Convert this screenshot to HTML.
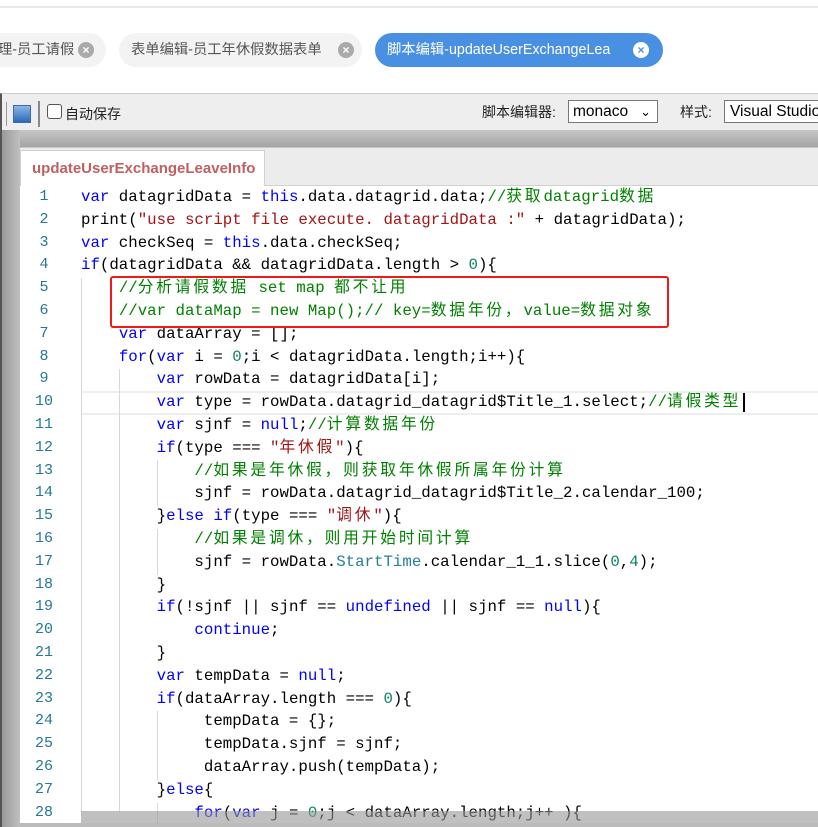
<!DOCTYPE html>
<html><head><meta charset="utf-8"><style>
*{margin:0;padding:0;box-sizing:border-box}
body{width:818px;height:827px;overflow:hidden;background:#fff;font-family:"Liberation Sans","Noto Sans CJK SC",sans-serif;position:relative}
.topline{position:absolute;left:0;top:6px;width:818px;height:2px;background:#e4e8ec}
.tab{position:absolute;top:33px;height:34px;border-radius:17px;background:#f3f3f3;color:#555;font-size:14.3px;line-height:34px;padding-left:12px;white-space:nowrap}
.tab .x{position:absolute;top:9px;width:16px;height:16px;border-radius:50%;background:#aaa;color:#fff;font-size:12px;line-height:16px;text-align:center;font-weight:bold}
.tab.act{background:#4a90e2;color:#fff}
.tab.act .x{background:#fff;color:#4a90e2}
.tb{position:absolute;left:0;top:93px;width:818px;height:37px;background:#eee;border-top:1px solid #ccc;border-left:2px solid #555}
.band{position:absolute;left:0;top:130px;width:818px;height:697px;background:linear-gradient(#c6c6c6,#a4a4a4 17px,#eaeaea 18px);border-left:2px solid #555}
.lside{position:absolute;left:2px;top:130px;width:18px;height:697px;background:linear-gradient(90deg,#999,#c0c0c0)}
.tabbar{position:absolute;left:20px;top:148px;width:798px;height:38px;background:#ececec;border-bottom:1px solid #d0d0d0}
.etab{position:absolute;left:20px;top:150px;width:245px;height:36px;background:#fff;border:1px solid #d0d0d0;border-bottom:none;color:#c06060;font-weight:bold;font-size:15px;line-height:36px;padding-left:11px}
.ed{position:absolute;left:20px;top:186px;width:798px;height:641px;background:#fff}
.ln{position:absolute;left:20px;width:48px;text-align:center;color:#237893;font-family:"Liberation Mono",monospace;font-size:15px}
.code{position:absolute;left:81px;top:186px;font-family:"Liberation Mono","Noto Sans CJK SC",monospace;font-size:15.75px;line-height:22.8px;color:#000}
.code div{height:22.8px;white-space:pre}
.k{color:#0000ff}.s{color:#a31515}.c{color:#008000}.n{color:#098658}.t{color:#267f99}
i{font-style:normal;letter-spacing:2.8px}
.g{position:absolute;width:1px;background:#d8d8d8}
</style></head><body>
<div class="topline"></div>
<div class="tab" style="left:-14px;width:120px">理-员工请假<span class="x" style="left:92px">×</span></div>
<div class="tab" style="left:119px;width:243px">表单编辑-员工年休假数据表单<span class="x" style="left:219px">×</span></div>
<div class="tab act" style="left:375px;width:288px">脚本编辑-updateUserExchangeLea<span class="x" style="left:258px">×</span></div>

<div class="tb">
 <div style="position:absolute;left:4px;top:8px;width:1px;height:24px;background:#999"></div>
 <div style="position:absolute;left:11px;top:11px;width:18px;height:18px;background:linear-gradient(#8ab8e8,#2a6ab8);border:1px solid #46a"></div>
 <div style="position:absolute;left:36px;top:7px;width:2px;height:26px;background:#888"></div>
 <div style="position:absolute;left:45px;top:10px;width:15px;height:15px;border:1px solid #555;border-radius:3px;background:#fff"></div>
 <div style="position:absolute;left:63px;top:10px;font-size:14px;color:#222">自动保存</div>
 <div style="position:absolute;left:480px;top:8px;font-size:14px;color:#222">脚本编辑器:</div>
 <div style="position:absolute;left:566px;top:6px;width:90px;height:23px;border:1px solid #777;background:#fff;font-size:15.5px;line-height:21px;padding-left:4px;color:#000">monaco<span style="position:absolute;right:6px;top:0;font-size:13px">⌄</span></div>
 <div style="position:absolute;left:678px;top:8px;font-size:14px;color:#222">样式:</div>
 <div style="position:absolute;left:722px;top:6px;width:110px;height:23px;border:1px solid #777;background:#fff;font-size:15.5px;line-height:21px;padding-left:5px;color:#000;white-space:nowrap">Visual Studio</div>
</div>
<div class="band"></div>
<div class="lside"></div>
<div class="tabbar"></div>
<div class="etab">updateUserExchangeLeaveInfo</div>
<div class="ed"></div>
<div style="position:absolute;left:81px;top:391px;width:737px;height:24px;border-top:2px solid #eee;border-bottom:2px solid #eee"></div>
<div style="position:absolute;left:743px;top:393px;width:2px;height:19px;background:#000"></div>
<div class="g" style="left:81px;top:278px;height:534px"></div>
<div class="g" style="left:119px;top:369px;height:443px"></div>
<div class="g" style="left:157px;top:460px;height:46px"></div>
<div class="g" style="left:157px;top:529px;height:46px"></div>
<div class="g" style="left:157px;top:711px;height:69px"></div>
<div class="g" style="left:157px;top:803px;height:20px"></div>

<div class="ln" style="top:186px;line-height:22.8px">1<br>2<br>3<br>4<br>5<br>6<br>7<br>8<br>9<br>10<br>11<br>12<br>13<br>14<br>15<br>16<br>17<br>18<br>19<br>20<br>21<br>22<br>23<br>24<br>25<br>26<br>27<br>28</div>

<div class="code"><div><span class="k">var</span> datagridData = <span class="k">this</span>.data.datagrid.data;<span class="c">//<i>获取</i>datagrid<i>数据</i></span></div><div>print(<span class="s">"use script file execute. datagridData :"</span> + datagridData);</div><div><span class="k">var</span> checkSeq = <span class="k">this</span>.data.checkSeq;</div><div><span class="k">if</span>(datagridData &amp;&amp; datagridData.length &gt; <span class="n">0</span>){</div><div>    <span class="c">//<i>分析请假数据</i> set map <i>都不让用</i></span></div><div>    <span class="c">//var dataMap = new Map();// key=<i>数据年份，</i>value=<i>数据对象</i></span></div><div>    <span class="k">var</span> dataArray = [];</div><div>    <span class="k">for</span>(<span class="k">var</span> i = <span class="n">0</span>;i &lt; datagridData.length;i++){</div><div>        <span class="k">var</span> rowData = datagridData[i];</div><div>        <span class="k">var</span> type = rowData.datagrid_datagrid$Title_1.select;<span class="c">//<i>请假类型</i></span></div><div>        <span class="k">var</span> sjnf = <span class="k">null</span>;<span class="c">//<i>计算数据年份</i></span></div><div>        <span class="k">if</span>(type === <span class="s">"<i>年休假</i>"</span>){</div><div>            <span class="c">//<i>如果是年休假，则获取年休假所属年份计算</i></span></div><div>            sjnf = rowData.datagrid_datagrid$Title_2.calendar_100;</div><div>        }<span class="k">else if</span>(type === <span class="s">"<i>调休</i>"</span>){</div><div>            <span class="c">//<i>如果是调休，则用开始时间计算</i></span></div><div>            sjnf = rowData.<span class="t">StartTime</span>.calendar_1_1.slice(<span class="n">0</span>,<span class="n">4</span>);</div><div>        }</div><div>        <span class="k">if</span>(!sjnf || sjnf == <span class="k">undefined</span> || sjnf == <span class="k">null</span>){</div><div>            <span class="k">continue</span>;</div><div>        }</div><div>        <span class="k">var</span> tempData = <span class="k">null</span>;</div><div>        <span class="k">if</span>(dataArray.length === <span class="n">0</span>){</div><div>             tempData = {};</div><div>             tempData.sjnf = sjnf;</div><div>             dataArray.push(tempData);</div><div>        }<span class="k">else</span>{</div><div>            <span class="k">for</span>(<span class="k">var</span> j = <span class="n">0</span>;j &lt; dataArray.length;j++ ){</div></div>
<div style="position:absolute;left:81px;top:811px;width:737px;height:12px;background:rgba(150,150,150,0.6)"></div>
<div style="position:absolute;left:20px;top:823px;width:798px;height:4px;background:#bbb"></div>
<div style="position:absolute;left:110px;top:276px;width:559px;height:52px;border:2px solid #f01818;border-radius:3px"></div>
</body></html>
